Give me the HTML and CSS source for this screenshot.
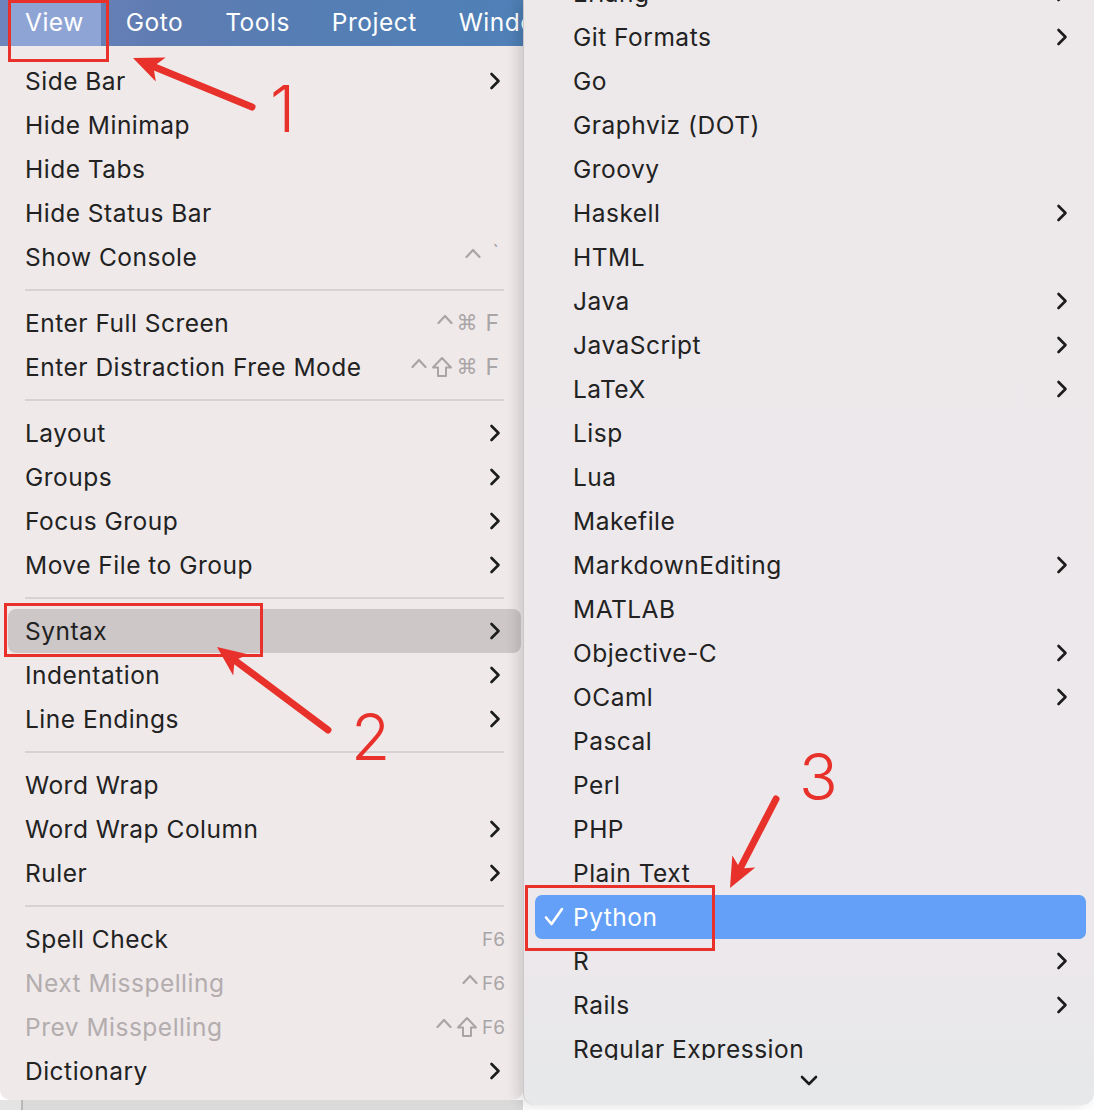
FILE: index.html
```html
<!DOCTYPE html>
<html>
<head>
<meta charset="utf-8">
<link rel="stylesheet" href="styles.css">
</head>
<body>
<div class="screen">
  <div class="left">
    <div class="menubar">
      <span class="mb-item active">View</span>
      <span class="mb-item">Goto</span>
      <span class="mb-item">Tools</span>
      <span class="mb-item">Project</span>
      <span class="mb-item">Window</span>
    </div>
    <div class="menu">
      <div class="row"><span class="label">Side Bar</span><svg class="chev" viewBox="0 0 12 18"><polyline points="2.5,2 9.5,9 2.5,16"/></svg></div>
      <div class="row"><span class="label">Hide Minimap</span></div>
      <div class="row"><span class="label">Hide Tabs</span></div>
      <div class="row"><span class="label">Hide Status Bar</span></div>
      <div class="row"><span class="label">Show Console</span>
        <span class="key"><svg class="k-ctrl" viewBox="0 0 16 10"><polyline points="1.5,9 8,2 14.5,9"/></svg><span class="k-txt k-tick">`</span></span></div>
      <div class="sep"></div>
      <div class="row"><span class="label">Enter Full Screen</span>
        <span class="key"><svg class="k-ctrl" viewBox="0 0 16 10"><polyline points="1.5,9 8,2 14.5,9"/></svg><span class="k-txt k-cmd">⌘</span><span class="k-txt k-f">F</span></span></div>
      <div class="row"><span class="label">Enter Distraction Free Mode</span>
        <span class="key"><svg class="k-ctrl" viewBox="0 0 16 10"><polyline points="1.5,9 8,2 14.5,9"/></svg><svg class="k-shift" viewBox="0 0 22 22"><path d="M11 2 L20 11.5 L15 11.5 L15 20 L7 20 L7 11.5 L2 11.5 Z"/></svg><span class="k-txt k-cmd">⌘</span><span class="k-txt k-f">F</span></span></div>
      <div class="sep"></div>
      <div class="row"><span class="label">Layout</span><svg class="chev" viewBox="0 0 12 18"><polyline points="2.5,2 9.5,9 2.5,16"/></svg></div>
      <div class="row"><span class="label">Groups</span><svg class="chev" viewBox="0 0 12 18"><polyline points="2.5,2 9.5,9 2.5,16"/></svg></div>
      <div class="row"><span class="label">Focus Group</span><svg class="chev" viewBox="0 0 12 18"><polyline points="2.5,2 9.5,9 2.5,16"/></svg></div>
      <div class="row"><span class="label">Move File to Group</span><svg class="chev" viewBox="0 0 12 18"><polyline points="2.5,2 9.5,9 2.5,16"/></svg></div>
      <div class="sep"></div>
      <div class="row hl"><span class="label">Syntax</span><svg class="chev" viewBox="0 0 12 18"><polyline points="2.5,2 9.5,9 2.5,16"/></svg></div>
      <div class="row"><span class="label">Indentation</span><svg class="chev" viewBox="0 0 12 18"><polyline points="2.5,2 9.5,9 2.5,16"/></svg></div>
      <div class="row"><span class="label">Line Endings</span><svg class="chev" viewBox="0 0 12 18"><polyline points="2.5,2 9.5,9 2.5,16"/></svg></div>
      <div class="sep"></div>
      <div class="row"><span class="label">Word Wrap</span></div>
      <div class="row"><span class="label">Word Wrap Column</span><svg class="chev" viewBox="0 0 12 18"><polyline points="2.5,2 9.5,9 2.5,16"/></svg></div>
      <div class="row"><span class="label">Ruler</span><svg class="chev" viewBox="0 0 12 18"><polyline points="2.5,2 9.5,9 2.5,16"/></svg></div>
      <div class="sep"></div>
      <div class="row"><span class="label">Spell Check</span>
        <span class="key fkey"><span class="k-txt k-f6">F6</span></span></div>
      <div class="row disabled"><span class="label">Next Misspelling</span>
        <span class="key fkey"><svg class="k-ctrl" viewBox="0 0 16 10"><polyline points="1.5,9 8,2 14.5,9"/></svg><span class="k-txt k-f6">F6</span></span></div>
      <div class="row disabled"><span class="label">Prev Misspelling</span>
        <span class="key fkey"><svg class="k-ctrl" viewBox="0 0 16 10"><polyline points="1.5,9 8,2 14.5,9"/></svg><svg class="k-shift" viewBox="0 0 22 22"><path d="M11 2 L20 11.5 L15 11.5 L15 20 L7 20 L7 11.5 L2 11.5 Z"/></svg><span class="k-txt k-f6">F6</span></span></div>
      <div class="row"><span class="label">Dictionary</span><svg class="chev" viewBox="0 0 12 18"><polyline points="2.5,2 9.5,9 2.5,16"/></svg></div>
    </div>
    <div class="under"></div>
  </div>

  <div class="sub">
    <div class="sub-list">
      <div class="sub-inner">
        <div class="srow"><span class="label">Erlang</span><svg class="chev" viewBox="0 0 12 18"><polyline points="2.5,2 9.5,9 2.5,16"/></svg></div>
        <div class="srow"><span class="label">Git Formats</span><svg class="chev" viewBox="0 0 12 18"><polyline points="2.5,2 9.5,9 2.5,16"/></svg></div>
        <div class="srow"><span class="label">Go</span></div>
        <div class="srow"><span class="label">Graphviz (DOT)</span></div>
        <div class="srow"><span class="label">Groovy</span></div>
        <div class="srow"><span class="label">Haskell</span><svg class="chev" viewBox="0 0 12 18"><polyline points="2.5,2 9.5,9 2.5,16"/></svg></div>
        <div class="srow"><span class="label">HTML</span></div>
        <div class="srow"><span class="label">Java</span><svg class="chev" viewBox="0 0 12 18"><polyline points="2.5,2 9.5,9 2.5,16"/></svg></div>
        <div class="srow"><span class="label">JavaScript</span><svg class="chev" viewBox="0 0 12 18"><polyline points="2.5,2 9.5,9 2.5,16"/></svg></div>
        <div class="srow"><span class="label">LaTeX</span><svg class="chev" viewBox="0 0 12 18"><polyline points="2.5,2 9.5,9 2.5,16"/></svg></div>
        <div class="srow"><span class="label">Lisp</span></div>
        <div class="srow"><span class="label">Lua</span></div>
        <div class="srow"><span class="label">Makefile</span></div>
        <div class="srow"><span class="label">MarkdownEditing</span><svg class="chev" viewBox="0 0 12 18"><polyline points="2.5,2 9.5,9 2.5,16"/></svg></div>
        <div class="srow"><span class="label">MATLAB</span></div>
        <div class="srow"><span class="label">Objective-C</span><svg class="chev" viewBox="0 0 12 18"><polyline points="2.5,2 9.5,9 2.5,16"/></svg></div>
        <div class="srow"><span class="label">OCaml</span><svg class="chev" viewBox="0 0 12 18"><polyline points="2.5,2 9.5,9 2.5,16"/></svg></div>
        <div class="srow"><span class="label">Pascal</span></div>
        <div class="srow"><span class="label">Perl</span></div>
        <div class="srow"><span class="label">PHP</span></div>
        <div class="srow"><span class="label">Plain Text</span></div>
        <div class="srow sel"><svg class="check" viewBox="0 0 22 22"><polyline points="3,11.5 8.5,18 19,3"/></svg><span class="label">Python</span></div>
        <div class="srow"><span class="label">R</span><svg class="chev" viewBox="0 0 12 18"><polyline points="2.5,2 9.5,9 2.5,16"/></svg></div>
        <div class="srow"><span class="label">Rails</span><svg class="chev" viewBox="0 0 12 18"><polyline points="2.5,2 9.5,9 2.5,16"/></svg></div>
        <div class="srow"><span class="label">Regular Expression</span></div>
      </div>
    </div>
    <div class="sub-more"><svg class="down" viewBox="0 0 18 12"><polyline points="2,2 9,9 16,2"/></svg></div>
  </div>

  <svg class="annot" viewBox="0 0 1094 1110">
    <rect x="9.5" y="1.5" width="98" height="59" class="box"/>
    <rect x="5.5" y="604.5" width="256" height="51" class="box"/>
    <rect x="526.5" y="886.5" width="187" height="63" class="box"/>

    <line x1="252" y1="107" x2="153.4" y2="66.4" class="shaft"/>
    <polygon points="133,58 165.7,57.4 153.4,66.4 155.8,81.4" class="head"/>

    <line x1="328" y1="730" x2="234.6" y2="660.2" class="shaft"/>
    <polygon points="217,647 248.8,654.6 234.6,660.2 233.2,675.4" class="head"/>

    <line x1="776" y1="799" x2="740.1" y2="868.5" class="shaft"/>
    <polygon points="730,888 732.3,855.4 740.1,868.5 755.3,867.4" class="head"/>

    <text x="270" y="132" class="num">1</text>
    <text x="351" y="760" class="num">2</text>
    <text x="799" y="800" class="num">3</text>
  </svg>
</div>
</body>
</html>
```

FILE: styles.css
```css
html, body {
  margin: 0;
  padding: 0;
  background: #ffffff;
}

.screen {
  position: relative;
  width: 1094px;
  height: 1110px;
  overflow: hidden;
  display: grid;
  grid-template-columns: 523px 571px;
  font-family: "Inter", "Noto Sans", "DejaVu Sans", sans-serif;
  font-size: 24.5px;
  letter-spacing: 0.5px;
  color: #222222;
}

/* ---------- left column ---------- */
.left {
  display: flex;
  flex-direction: column;
  min-width: 0;
}

.menubar {
  height: 46px;
  display: flex;
  gap: 8px;
  padding-left: 8px;
  background: linear-gradient(90deg, #6f86bd 0%, #5f7cb2 30%, #557eb4 60%, #4f80b7 100%);
  overflow: hidden;
  white-space: nowrap;
}

.mb-item {
  padding: 0 17px;
  line-height: 44px;
  color: #ffffff;
}

.mb-item.active {
  background: #8ea4d5;
}

.menu {
  height: 1054px;
  box-sizing: border-box;
  padding: 13px 0 7px;
  background: #efe9ea;
  border-radius: 0 0 10px 10px;
}

.row {
  height: 44px;
  display: flex;
  align-items: center;
  padding: 0 22px 0 25px;
  white-space: nowrap;
}

.row .label {
  flex: 1;
}

.row.hl {
  background: #cdc7c8;
  border-radius: 8px;
  margin: 0 2px 0 8px;
  padding-left: 17px;
  padding-right: 20px;
}

.row.disabled {
  color: #b3adae;
}

.sep {
  height: 22px;
  display: flex;
  align-items: center;
  padding: 0 19px 0 25px;
}

.sep::after {
  content: "";
  flex: 1;
  height: 2px;
  background: #d7d2d3;
}

/* shortcut glyphs */
.key {
  display: flex;
  align-items: center;
  color: #a9a5a6;
  letter-spacing: 0;
  margin-right: 2px;
}

.key.fkey {
  margin-right: -4px;
}

.k-ctrl {
  width: 16px;
  height: 10px;
  margin-top: -8px;
  fill: none;
  stroke: #a9a5a6;
  stroke-width: 2.2;
  stroke-linecap: round;
  stroke-linejoin: round;
}

.k-shift {
  width: 22px;
  height: 22px;
  margin-left: 4px;
  fill: none;
  stroke: #a9a5a6;
  stroke-width: 2;
  stroke-linejoin: round;
}

.k-txt {
  font-family: "Inter", "DejaVu Sans", sans-serif;
  font-size: 22px;
}

.k-cmd {
  font-family: "DejaVu Sans", sans-serif;
  font-size: 21px;
  margin-left: 3px;
}

.k-f {
  margin-left: 8px;
  font-size: 23px;
}

.k-tick {
  margin-left: 12px;
  margin-top: -10px;
  font-size: 20px;
}

.k-f6 {
  font-size: 19px;
  margin-left: 4px;
}

.chev {
  width: 12px;
  height: 18px;
  fill: none;
  stroke: #1c1c1c;
  stroke-width: 2.6;
  stroke-linecap: round;
  stroke-linejoin: round;
}

.under {
  flex: 1;
  background: linear-gradient(90deg, #e4e4e4 0, #e4e4e4 21px, #b8b8b8 21px, #b8b8b8 23px, #dadada 23px);
}

/* ---------- submenu ---------- */
.sub {
  position: relative;
  z-index: 1;
  height: 1105px;
  display: flex;
  flex-direction: column;
  background: linear-gradient(180deg, #ede8ea 0%, #ede8eb 85%, #e6e8ea 100%);
  border-left: 1px solid #cbc6c7;
  border-radius: 0 0 12px 12px;
  box-shadow: -5px 0 14px rgba(0, 0, 0, 0.14);
  overflow: hidden;
}

.sub-list {
  height: 1060px;
  overflow: hidden;
}

.sub-inner {
  margin-top: -29px;
}

.srow {
  height: 44px;
  display: flex;
  align-items: center;
  padding: 0 26px 0 49px;
  white-space: nowrap;
}

.srow .label {
  flex: 1;
}

.srow.sel {
  background: #64a0f7;
  color: #ffffff;
  border-radius: 7px;
  margin: 0 8px 0 11px;
  padding-left: 8px;
}

.check {
  width: 22px;
  height: 22px;
  margin-right: 8px;
  fill: none;
  stroke: #ffffff;
  stroke-width: 2.6;
  stroke-linecap: round;
  stroke-linejoin: round;
}

.sub-more {
  flex: 1;
  display: flex;
  justify-content: center;
  padding-top: 15px;
}

.down {
  width: 18px;
  height: 12px;
  fill: none;
  stroke: #1c1c1c;
  stroke-width: 2.6;
  stroke-linecap: round;
  stroke-linejoin: round;
}

/* ---------- annotations ---------- */
.annot {
  position: absolute;
  left: 0;
  top: 0;
  width: 1094px;
  height: 1110px;
  z-index: 5;
  pointer-events: none;
}

.box {
  fill: none;
  stroke: #e8312a;
  stroke-width: 3;
}

.shaft {
  stroke: #e8312a;
  stroke-width: 7;
  stroke-linecap: round;
}

.head {
  fill: #e8312a;
}

.num {
  fill: #e8312a;
  font-family: "Inter", "Liberation Sans", sans-serif;
  font-weight: 300;
  font-size: 64px;
  letter-spacing: 0;
}
```
